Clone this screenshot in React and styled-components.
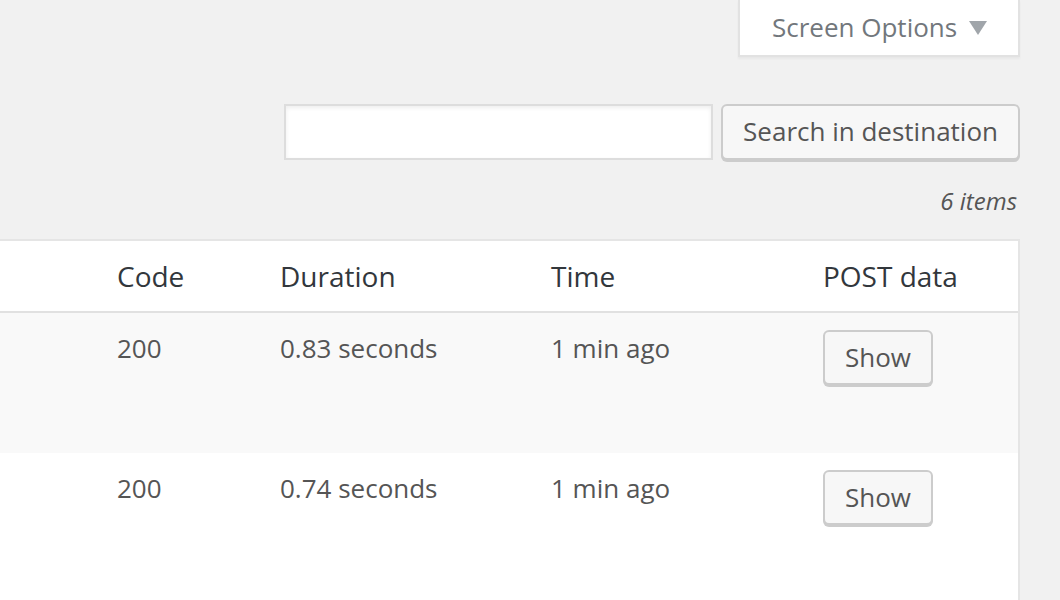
import React from 'react';
import styled, { createGlobalStyle } from 'styled-components';

const GlobalStyle = createGlobalStyle`
  html, body {
    margin: 0;
    padding: 0;
    background: #f1f1f1;
  }
  body {
    font-family: "Open Sans", "DejaVu Sans", sans-serif;
    color: #555;
  }
`;

const Page = styled.div`
  width: 1060px;
  height: 600px;
  overflow: hidden;
`;

const TopBar = styled.div`
  display: flex;
  justify-content: flex-end;
  padding-right: 40px;
`;

const ScreenOptionsTab = styled.button`
  display: flex;
  align-items: center;
  gap: 12px;
  width: 282px;
  height: 57px;
  box-sizing: border-box;
  padding: 0 0 2px 32px;
  background: #fff;
  border: 2px solid #e2e2e2;
  border-top: none;
  box-shadow: 0 2px 2px rgba(0, 0, 0, 0.04);
  font-family: inherit;
  font-size: 26px;
  color: #72777c;
  cursor: pointer;
`;

const Arrow = styled.span`
  width: 0;
  height: 0;
  border-left: 9px solid transparent;
  border-right: 9px solid transparent;
  border-top: 14px solid #a0a5aa;
  margin-top: 2px;
`;

const SearchRow = styled.div`
  display: flex;
  justify-content: flex-end;
  gap: 8px;
  margin-top: 47px;
  padding-right: 40px;
`;

const SearchInput = styled.input`
  width: 429px;
  height: 56px;
  box-sizing: border-box;
  border: 2px solid #ddd;
  box-shadow: inset 0 2px 4px rgba(0, 0, 0, 0.07);
  background: #fff;
  font-family: inherit;
  font-size: 26px;
  padding: 0 10px;
  outline: none;
`;

const Button = styled.button`
  height: ${p => p.$h || 56}px;
  box-sizing: border-box;
  padding: 0 ${p => p.$px || 20}px 2px;
  background: #f7f7f7;
  border: 2px solid #ccc;
  border-radius: 6px;
  box-shadow: 0 2px 0 #ccc;
  font-family: inherit;
  font-size: 26px;
  color: #555;
  cursor: pointer;
  white-space: nowrap;
`;

const ItemsCount = styled.div`
  text-align: right;
  padding-right: 43px;
  margin-top: 24px;
  font-size: 24px;
  font-style: italic;
  color: #555;
`;

const Table = styled.div`
  margin-top: 22px;
  margin-left: -2px;
  width: 1022px;
  background: #fff;
  border: 2px solid #e5e5e5;
  border-bottom: none;
  box-sizing: border-box;
  min-height: 400px;
`;

const Row = styled.div`
  display: grid;
  grid-template-columns: 101px 163px 271px 272px 1fr;
  align-items: start;
  height: ${p => p.$h}px;
  box-sizing: border-box;
  background: ${p => p.$bg || '#fff'};
  border-bottom: ${p => (p.$head ? '2px solid #e1e1e1' : 'none')};
`;

const HeadCell = styled.div`
  padding: 16px 16px 0;
  font-size: 28px;
  line-height: 38px;
  color: #32373c;
`;

const Cell = styled.div`
  padding: 15px 16px 0;
  font-size: 26px;
  line-height: 40px;
  color: #555;
`;

const ButtonCell = styled.div`
  padding: 17px 16px 0;
`;

const rows = [
  { code: 200, duration: '0.83 seconds', time: '1 min ago', bg: '#f9f9f9' },
  { code: 200, duration: '0.74 seconds', time: '1 min ago', bg: '#fff' },
];

export default function App() {
  return (
    <Page>
      <GlobalStyle />
      <TopBar>
        <ScreenOptionsTab>
          Screen Options <Arrow />
        </ScreenOptionsTab>
      </TopBar>
      <SearchRow>
        <SearchInput type="search" />
        <Button>Search in destination</Button>
      </SearchRow>
      <ItemsCount>6 items</ItemsCount>
      <Table>
        <Row $head $h={72}>
          <HeadCell />
          <HeadCell>Code</HeadCell>
          <HeadCell>Duration</HeadCell>
          <HeadCell>Time</HeadCell>
          <HeadCell>POST data</HeadCell>
        </Row>
        {rows.map((r, i) => (
          <Row key={i} $h={140} $bg={r.bg}>
            <Cell />
            <Cell>{r.code}</Cell>
            <Cell>{r.duration}</Cell>
            <Cell>{r.time}</Cell>
            <ButtonCell>
              <Button $h={55}>Show</Button>
            </ButtonCell>
          </Row>
        ))}
      </Table>
    </Page>
  );
}
